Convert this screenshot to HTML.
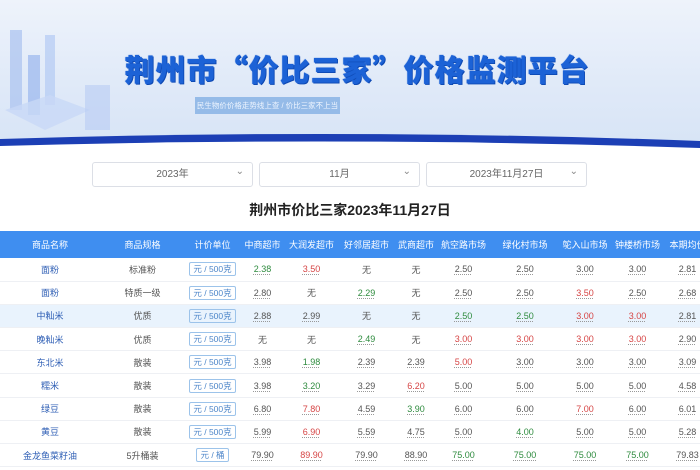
<!DOCTYPE html>
<html><head><meta charset="utf-8"><style>
*{margin:0;padding:0;box-sizing:border-box}
body{width:700px;height:470px;overflow:hidden;background:#fff;font-family:"Liberation Sans","Noto Sans CJK SC",sans-serif;position:relative}
.hdr{position:absolute;left:0;top:0;width:700px;height:150px;background:linear-gradient(180deg,#eef3fb 0%,#dfe9f8 60%,#d7e4f6 100%)}
.ttl{position:absolute;left:112px;top:46px;width:490px;text-align:center;font-size:30px;font-weight:900;color:#1c62d6;letter-spacing:1px;font-family:"Noto Sans CJK SC",sans-serif;text-shadow:0 0 1px #1c62d6,1px 1px 0 #0d47b0}
.sub{position:absolute;left:195px;top:97px;width:145px;height:17px;background:#95bbe8;color:#eef5ff;font-size:7.5px;line-height:17px;text-align:center;white-space:nowrap;overflow:hidden}
.sel{position:absolute;top:162px;height:25px;width:161px;border:1px solid #dcdfe6;border-radius:3px;background:#fff;font-size:10px;color:#666;text-align:center;line-height:23px}
.sel:after{content:"⌄";position:absolute;right:8px;top:-3px;font-size:10px;color:#888}
.h2{position:absolute;top:200px;left:0;width:700px;text-align:center;font-size:14px;font-weight:bold;color:#222}
table{position:absolute;left:0;top:231px;width:710px;border-collapse:collapse;font-size:9px}
th{background:#3f8ef0;color:#fff;font-weight:normal;height:27px}
td{height:23.2px;text-align:center;color:#555;border-bottom:1px solid #eef0f4}
tr.hl td{background:#e9f3fd}
td.n{color:#2f5fb5}
u{text-decoration:underline dotted #999;text-underline-offset:2px}
.g{color:#2e8b3e}.r{color:#d64545}
.b{display:inline-block;border:1px solid #9cc3ea;border-radius:2px;color:#4d86c9;padding:0 3px;line-height:12px;font-size:8.5px}
</style></head><body>
<div class="hdr">
<svg width="140" height="140" style="position:absolute;left:0;top:0">
<rect x="10" y="30" width="12" height="80" fill="#a9c2f0" opacity=".7"/>
<rect x="28" y="55" width="12" height="60" fill="#9ab7ee" opacity=".7"/>
<rect x="45" y="35" width="10" height="70" fill="#b4cbf4" opacity=".7"/>
<polygon points="5,110 50,95 90,110 45,130" fill="#c8d8f6" opacity=".8"/>
<rect x="85" y="85" width="25" height="45" fill="#b7ccf3" opacity=".6"/>
</svg>
<div class="ttl">荆州市“价比三家”价格监测平台</div>
<div class="sub">民生物价价格走势线上查 / 价比三家不上当</div>
</div>
<svg width="700" height="160" style="position:absolute;left:0;top:0">
<path d="M0,139 Q350,128 700,141 L700,160 L0,160Z" fill="#1c3fb5"/>
<path d="M0,146 Q350,136 700,148 L700,160 L0,160Z" fill="#fff"/>
</svg>
<div class="sel" style="left:92px">2023年</div>
<div class="sel" style="left:259px">11月</div>
<div class="sel" style="left:426px">2023年11月27日</div>
<div class="h2">荆州市价比三家2023年11月27日</div>
<table>
<colgroup><col style="width:100px"><col style="width:85px"><col style="width:55px"><col style="width:45px"><col style="width:53px"><col style="width:57px"><col style="width:42px"><col style="width:53px"><col style="width:70px"><col style="width:50px"><col style="width:55px"><col style="width:45px"></colgroup>
<tr><th>商品名称</th><th>商品规格</th><th>计价单位</th><th>中商超市</th><th>大润发超市</th><th>好邻居超市</th><th>武商超市</th><th>航空路市场</th><th>绿化村市场</th><th>鸵入山市场</th><th>钟楼桥市场</th><th>本期均价</th></tr>
<tr><td class="n">面粉</td><td>标准粉</td><td><span class="b">元 / 500克</span></td><td><u class="g">2.38</u></td><td><u class="r">3.50</u></td><td>无</td><td>无</td><td><u>2.50</u></td><td><u>2.50</u></td><td><u>3.00</u></td><td><u>3.00</u></td><td><u>2.81</u></td></tr>
<tr><td class="n">面粉</td><td>特质一级</td><td><span class="b">元 / 500克</span></td><td><u>2.80</u></td><td>无</td><td><u class="g">2.29</u></td><td>无</td><td><u>2.50</u></td><td><u>2.50</u></td><td><u class="r">3.50</u></td><td><u>2.50</u></td><td><u>2.68</u></td></tr>
<tr class="hl"><td class="n">中籼米</td><td>优质</td><td><span class="b">元 / 500克</span></td><td><u>2.88</u></td><td><u>2.99</u></td><td>无</td><td>无</td><td><u class="g">2.50</u></td><td><u class="g">2.50</u></td><td><u class="r">3.00</u></td><td><u class="r">3.00</u></td><td><u>2.81</u></td></tr>
<tr><td class="n">晚籼米</td><td>优质</td><td><span class="b">元 / 500克</span></td><td>无</td><td>无</td><td><u class="g">2.49</u></td><td>无</td><td><u class="r">3.00</u></td><td><u class="r">3.00</u></td><td><u class="r">3.00</u></td><td><u class="r">3.00</u></td><td><u>2.90</u></td></tr>
<tr><td class="n">东北米</td><td>散装</td><td><span class="b">元 / 500克</span></td><td><u>3.98</u></td><td><u class="g">1.98</u></td><td><u>2.39</u></td><td><u>2.39</u></td><td><u class="r">5.00</u></td><td><u>3.00</u></td><td><u>3.00</u></td><td><u>3.00</u></td><td><u>3.09</u></td></tr>
<tr><td class="n">糯米</td><td>散装</td><td><span class="b">元 / 500克</span></td><td><u>3.98</u></td><td><u class="g">3.20</u></td><td><u>3.29</u></td><td><u class="r">6.20</u></td><td><u>5.00</u></td><td><u>5.00</u></td><td><u>5.00</u></td><td><u>5.00</u></td><td><u>4.58</u></td></tr>
<tr><td class="n">绿豆</td><td>散装</td><td><span class="b">元 / 500克</span></td><td><u>6.80</u></td><td><u class="r">7.80</u></td><td><u>4.59</u></td><td><u class="g">3.90</u></td><td><u>6.00</u></td><td><u>6.00</u></td><td><u class="r">7.00</u></td><td><u>6.00</u></td><td><u>6.01</u></td></tr>
<tr><td class="n">黄豆</td><td>散装</td><td><span class="b">元 / 500克</span></td><td><u>5.99</u></td><td><u class="r">6.90</u></td><td><u>5.59</u></td><td><u>4.75</u></td><td><u>5.00</u></td><td><u class="g">4.00</u></td><td><u>5.00</u></td><td><u>5.00</u></td><td><u>5.28</u></td></tr>
<tr><td class="n">金龙鱼菜籽油</td><td>5升桶装</td><td><span class="b">元 / 桶</span></td><td><u>79.90</u></td><td><u class="r">89.90</u></td><td><u>79.90</u></td><td><u>88.90</u></td><td><u class="g">75.00</u></td><td><u class="g">75.00</u></td><td><u class="g">75.00</u></td><td><u class="g">75.00</u></td><td><u>79.83</u></td></tr>
</table>
</body></html>
